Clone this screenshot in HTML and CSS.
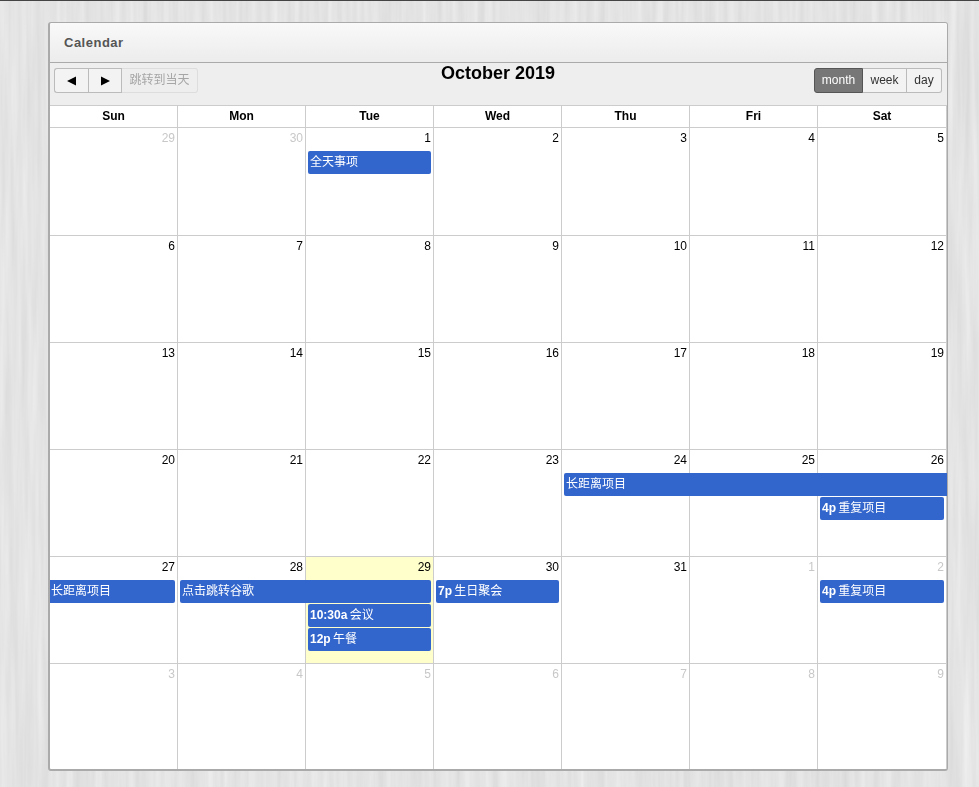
FILE: index.html
```html
<!DOCTYPE html>
<html lang="zh">
<head>
<meta charset="utf-8">
<title>Calendar</title>
<link rel="stylesheet" href="styles.css">
</head>
<body>
<svg class="wood" width="979" height="787" aria-hidden="true">
  <filter id="grain" x="0" y="0" width="100%" height="100%" color-interpolation-filters="sRGB">
    <feTurbulence type="fractalNoise" baseFrequency="0.14 0.006" numOctaves="3" seed="7"/>
    <feColorMatrix type="matrix" values=".14 0 0 0 .83  .14 0 0 0 .83  .14 0 0 0 .83  0 0 0 0 .7"/>
  </filter>
  <rect width="979" height="787" filter="url(#grain)"/>
</svg>
<main class="panel">
  <header class="panel-title">Calendar</header>
  <div class="toolbar">
    <div class="toolbar-left">
      <button class="btn btn-first" aria-label="previous">
        <svg width="10" height="10" viewBox="0 0 10 10"><path d="M0 5 L9 .5 V9.5 Z"/></svg>
      </button>
      <button class="btn btn-mid" aria-label="next">
        <svg width="10" height="10" viewBox="0 0 10 10"><path d="M10 5 L1 .5 V9.5 Z"/></svg>
      </button>
      <button class="btn btn-today">跳转到当天</button>
    </div>
    <h2 class="toolbar-title">October 2019</h2>
    <div class="toolbar-right">
      <button class="view view-active">month</button>
      <button class="view view-week">week</button>
      <button class="view view-last">day</button>
    </div>
  </div>
  <div class="head">
    <div class="head-cell">Sun</div><div class="head-cell">Mon</div><div class="head-cell">Tue</div><div class="head-cell">Wed</div><div class="head-cell">Thu</div><div class="head-cell">Fri</div><div class="head-cell">Sat</div>
  </div>

  <section class="week week-first">
    <div class="day d1 other">29</div><div class="day d2 other">30</div><div class="day d3">1</div><div class="day d4">2</div><div class="day d5">3</div><div class="day d6">4</div><div class="day d7">5</div>
    <div class="event c3 s1 r1">全天事项</div>
  </section>
  <section class="week">
    <div class="day d1">6</div><div class="day d2">7</div><div class="day d3">8</div><div class="day d4">9</div><div class="day d5">10</div><div class="day d6">11</div><div class="day d7">12</div>
  </section>
  <section class="week">
    <div class="day d1">13</div><div class="day d2">14</div><div class="day d3">15</div><div class="day d4">16</div><div class="day d5">17</div><div class="day d6">18</div><div class="day d7">19</div>
  </section>
  <section class="week">
    <div class="day d1">20</div><div class="day d2">21</div><div class="day d3">22</div><div class="day d4">23</div><div class="day d5">24</div><div class="day d6">25</div><div class="day d7">26</div>
    <div class="event c5 s3 r1 cont-right">长距离项目</div>
    <div class="event c7 s1 r2"><b>4p</b> 重复项目</div>
  </section>
  <section class="week">
    <div class="day d1">27</div><div class="day d2">28</div><div class="day d3 today">29</div><div class="day d4">30</div><div class="day d5">31</div><div class="day d6 other">1</div><div class="day d7 other">2</div>
    <div class="event c1 s1 r1 cont-left">长距离项目</div>
    <div class="event c2 s2 r1">点击跳转谷歌</div>
    <div class="event c4 s1 r1"><b>7p</b> 生日聚会</div>
    <div class="event c7 s1 r1"><b>4p</b> 重复项目</div>
    <div class="event c3 s1 r2"><b>10:30a</b> 会议</div>
    <div class="event c3 s1 r3"><b>12p</b> 午餐</div>
  </section>
  <section class="week week-last">
    <div class="day d1 other">3</div><div class="day d2 other">4</div><div class="day d3 other">5</div><div class="day d4 other">6</div><div class="day d5 other">7</div><div class="day d6 other">8</div><div class="day d7 other">9</div>
  </section>
</main>
</body>
</html>
```
FILE: styles.css
```css
* { box-sizing: border-box; }
html, body { margin: 0; height: 100%; }
body {
  border-top: 1px solid #444;
  padding: 21px 0 0 48px;
  overflow: hidden;
  font: 12px/1.2 "Liberation Sans", "Noto Sans CJK SC", sans-serif;
  color: #000;
  background-color: #dfdfdf;
  background-image:
    repeating-linear-gradient(90deg,
      rgba(0,0,0,0) 0, rgba(0,0,0,0) 70px,
      rgba(0,0,0,.03) 76px, rgba(0,0,0,.03) 96px,
      rgba(0,0,0,0) 102px, rgba(0,0,0,0) 153px);
}
.wood { position: fixed; left: 0; top: 0; z-index: -1; display: block; }

.panel {
  width: 900px;
  height: 749px;
  background: #fff;
  border: 1px solid #aaa;
  border-left-width: 2px;
  border-bottom-width: 2px;
  border-radius: 3px;
  display: flex;
  flex-direction: column;
}
.panel-title {
  flex: none;
  height: 40px;
  padding: 12px 14px 0;
  font-size: 13px;
  font-weight: bold;
  line-height: 16px;
  letter-spacing: .5px;
  color: #555;
  background: linear-gradient(#f9f9f9, #ececec);
  border-bottom: 1px solid #aaa;
  border-radius: 3px 3px 0 0;
}

.toolbar {
  flex: none;
  height: 43px;
  padding: 5px 5px 0 4px;
  background: #eee;
  border-bottom: 1px solid #ccc;
  display: flex;
  justify-content: space-between;
  align-items: flex-start;
}
.toolbar-left, .toolbar-right { display: flex; height: 25px; }
.toolbar-title {
  margin: -6px 0 0 -16px;
  font-size: 18px;
  line-height: 22px;
  font-weight: bold;
}
button {
  font: inherit;
  padding: 0;
  margin: 0;
  background: #f3f3f3;
  color: #333;
  border: 1px solid #bbb;
}
.btn { display: flex; align-items: center; justify-content: center; height: 25px; }
.btn-first { width: 34px; border-radius: 3px 0 0 3px; border-right: 0; }
.btn-mid { width: 34px; }
.btn-today {
  width: 76px;
  color: #a6a6a6;
  background: #eee;
  border-color: #ddd;
  border-left: 0;
  border-radius: 0 3px 3px 0;
}
.view { height: 25px; border-left: 0; }
.view-active {
  width: 49px;
  background: #777;
  color: #fff;
  border: 1px solid #555;
  border-radius: 3px 0 0 3px;
}
.view-week { width: 44px; }
.view-last { width: 35px; border-radius: 0 3px 3px 0; }

.head {
  flex: none;
  display: grid;
  grid-template-columns: repeat(6, 128px) 1fr;
  height: 22px;
  border-bottom: 1px solid #ccc;
}
.head-cell {
  font-weight: bold;
  text-align: center;
  line-height: 21px;
  border-right: 1px solid #ccc;
}

.week {
  display: grid;
  grid-template-columns: repeat(6, 128px) 1fr;
  grid-template-rows: 23px 24px 24px 24px 1fr;
  height: 107px;
  flex: none;
}
.week-first { height: 108px; }
.week-last { flex: 1 1 0; height: auto; min-height: 0; }
.week-last .day { border-bottom: 0; }
.day {
  grid-row: 1 / -1;
  padding: 3px 2px 0 0;
  text-align: right;
  line-height: 14px;
  border-right: 1px solid #ccc;
  border-bottom: 1px solid #ccc;
}
.d1 { grid-column: 1; } .d2 { grid-column: 2; } .d3 { grid-column: 3; } .d4 { grid-column: 4; }
.d5 { grid-column: 5; } .d6 { grid-column: 6; } .d7 { grid-column: 7; }
.other { color: #c8c8c8; }
.today { background: #ffc; }

.event {
  height: 23px;
  margin: 0 3px 0 2px;
  padding-left: 2px;
  line-height: 22px;
  color: #fff;
  background: #36c;
  border-radius: 2px;
  white-space: nowrap;
  overflow: hidden;
}
.event b { margin-right: -1px; }
.c1 { grid-column-start: 1; } .c2 { grid-column-start: 2; } .c3 { grid-column-start: 3; } .c4 { grid-column-start: 4; }
.c5 { grid-column-start: 5; } .c7 { grid-column-start: 7; }
.s1 { grid-column-end: span 1; } .s2 { grid-column-end: span 2; } .s3 { grid-column-end: span 3; }
.r1 { grid-row: 2; } .r2 { grid-row: 3; } .r3 { grid-row: 4; }
.cont-right { margin-right: 0; border-radius: 2px 0 0 2px; }
.cont-left { margin-left: 0; padding-left: 1px; border-radius: 0 2px 2px 0; }
```
